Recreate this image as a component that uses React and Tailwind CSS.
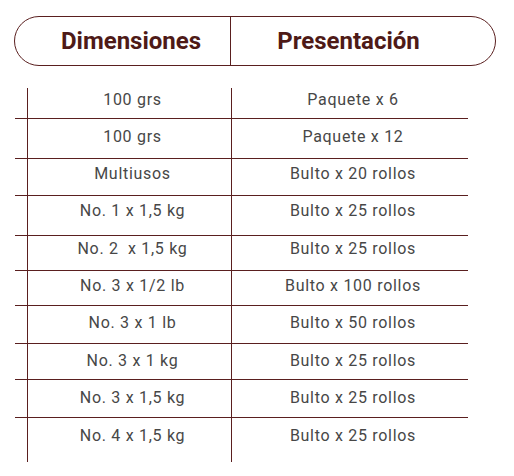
import React from 'react';

const rows = [
  { dim: '100 grs', pres: 'Paquete x 6', h: 'h-[31px] border-b', pt: 'pt-[2px]' },
  { dim: '100 grs', pres: 'Paquete x 12', h: 'h-[40px] border-b', pt: 'pt-[8px]' },
  { dim: 'Multiusos', pres: 'Bulto x 20 rollos', h: 'h-[37px] border-b', pt: 'pt-[5px]' },
  { dim: 'No. 1 x 1,5 kg', pres: 'Bulto x 25 rollos', h: 'h-[40px] border-b', pt: 'pt-[5px]' },
  { dim: 'No. 2\u00a0 x 1,5 kg', pres: 'Bulto x 25 rollos', h: 'h-[35px] border-b', pt: 'pt-[3px]' },
  { dim: 'No. 3 x 1/2 lb', pres: 'Bulto x 100 rollos', h: 'h-[35px] border-b', pt: 'pt-[5px]' },
  { dim: 'No. 3 x 1 lb', pres: 'Bulto x 50 rollos', h: 'h-[38px] border-b', pt: 'pt-[7px]' },
  { dim: 'No. 3 x 1 kg', pres: 'Bulto x 25 rollos', h: 'h-[36px] border-b', pt: 'pt-[7px]' },
  { dim: 'No. 3 x 1,5 kg', pres: 'Bulto x 25 rollos', h: 'h-[38px] border-b', pt: 'pt-[8px]' },
  { dim: 'No. 4 x 1,5 kg', pres: 'Bulto x 25 rollos', h: 'h-[44px]', pt: 'pt-[8px]' },
];

const App = () => {
  return (
    <div className="w-[514px] h-[476px] bg-white pt-[16px]" style={{ fontFamily: 'Roboto, "Liberation Sans", sans-serif' }}>
      {/* header pill */}
      <div className="ml-[14px] w-[482px] h-[50px] border border-[#5a1f1f] rounded-full grid grid-cols-[216px_1fr] text-[#4e1a17] text-[24px] font-bold">
        <div className="flex items-center justify-center pl-[17px] border-r border-[#5a1f1f]">Dimensiones</div>
        <div className="flex items-center justify-center pr-[29px]">Presentación</div>
      </div>

      {/* table */}
      <div className="ml-[15px] mt-[22px] w-[453px] text-[16px] leading-[20px] tracking-[0.7px] text-[#474747]">
        {rows.map((r, i) => (
          <div key={i} className={`grid grid-cols-[12px_204px_1fr] border-[#5a1f1f] ${r.h}`}>
            <div />
            <div className={`border-l border-[#5a1f1f] text-center pl-[6px] ${r.pt}`}>{r.dim}</div>
            <div className={`border-l border-[#5a1f1f] text-center pl-[6px] ${r.pt}`}>{r.pres}</div>
          </div>
        ))}
      </div>
    </div>
  );
};

export default App;
